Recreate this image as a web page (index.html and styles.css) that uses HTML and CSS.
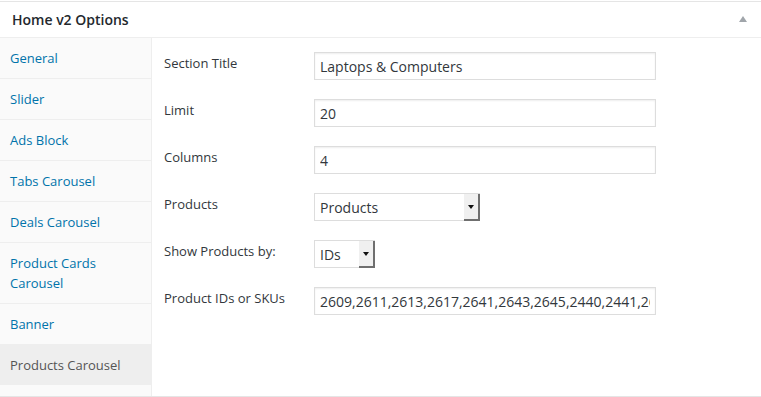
FILE: index.html
```html
<!DOCTYPE html>
<html lang="en">
<head>
  <meta charset="UTF-8" />
  <title>Home v2 Options</title>
  <link rel="stylesheet" href="styles.css">
</head>
<body>

  <div class="postbox">
    <div class="hndle">
      <h2>Home v2 Options</h2>
      <span class="toggle"></span>
    </div>

    <div class="inside">
      <ul class="tabs">
        <li><a href="#">General</a></li>
        <li><a href="#">Slider</a></li>
        <li><a href="#">Ads Block</a></li>
        <li><a href="#">Tabs Carousel</a></li>
        <li><a href="#">Deals Carousel</a></li>
        <li><a href="#">Product Cards Carousel</a></li>
        <li><a href="#">Banner</a></li>
        <li class="active"><a href="#">Products Carousel</a></li>
      </ul>

      <div class="panel">
        <label for="title">Section Title</label>
        <input type="text" id="title" value="Laptops &amp; Computers" />

        <label for="limit">Limit</label>
        <input type="text" id="limit" value="20" />

        <label for="columns">Columns</label>
        <input type="text" id="columns" value="4" />

        <label for="products">Products</label>
        <span class="select-wrap wide">
          <select id="products">
            <option>Products</option>
          </select>
        </span>

        <label for="by">Show Products by:</label>
        <span class="select-wrap narrow">
          <select id="by">
            <option>IDs</option>
          </select>
        </span>

        <label for="ids">Product IDs or SKUs</label>
        <input type="text" id="ids" value="2609,2611,2613,2617,2641,2643,2645,2440,2441,2619,2621" />
      </div>
    </div>
  </div>

</body>
</html>
```

FILE: styles.css
```css
body {
  margin: 0;
  padding-top: 1px;
  font-family: "Open Sans", sans-serif;
  font-size: 13px;
  color: #32373c;
  background: #fff;
}
.postbox {
  border-top: 1px solid #e5e5e5;
  border-bottom: 1px solid #e5e5e5;
  background: #fff;
}
.hndle {
  display: flex;
  align-items: center;
  justify-content: space-between;
  border-bottom: 1px solid #eee;
  padding: 8px 14px 8px 12px;
}
.hndle h2 {
  margin: 0;
  font-size: 14px;
  line-height: 19px;
  font-weight: 600;
  color: #23282d;
}
.toggle {
  width: 0;
  height: 0;
  border-left: 4px solid transparent;
  border-right: 4px solid transparent;
  border-bottom: 6px solid #a0a5aa;
  margin-top: -2px;
}
.inside {
  display: flex;
  height: 358px;
}
.tabs {
  list-style: none;
  margin: 0;
  padding: 0;
  width: 151px;
  background: #fafafa;
  border-right: 1px solid #eee;
}
.tabs li {
  border-bottom: 1px solid #eee;
  padding: 10px;
  line-height: 20px;
}
.tabs a {
  color: #0073aa;
  text-decoration: none;
}
.tabs li.active {
  background: #eee;
  border-bottom: none;
}
.tabs li.active a {
  color: #555;
}
.panel {
  display: grid;
  grid-template-columns: 150px auto;
  grid-auto-rows: 28px;
  row-gap: 19px;
  align-content: start;
  padding: 14px 12px 0;
}
.panel label {
  line-height: 20px;
  padding-top: 1px;
}
.panel input {
  width: 342px;
  height: 28px;
  box-sizing: border-box;
  margin: 0;
  padding: 3px 5px;
  border: 1px solid #ddd;
  box-shadow: inset 0 1px 2px rgba(0,0,0,0.07);
  font-family: "Open Sans", sans-serif;
  font-size: 14px;
  color: #32373c;
  outline: none;
}
.select-wrap {
  position: relative;
  display: inline-block;
  height: 28px;
}
.select-wrap.wide {
  width: 166px;
}
.select-wrap.narrow {
  width: 61px;
}
.select-wrap select {
  -webkit-appearance: none;
  appearance: none;
  width: 100%;
  height: 28px;
  margin: 0;
  padding: 0 5px;
  border: 1px solid #ddd;
  border-radius: 0;
  background: #fff;
  font-family: "Open Sans", sans-serif;
  font-size: 14px;
  color: #32373c;
}
.select-wrap::after {
  content: "";
  position: absolute;
  top: 1px;
  right: 0;
  bottom: 0;
  width: 16px;
  background: #f0f0f0;
  box-shadow: inset -2px -2px 0 #6f6f6f;
}
.select-wrap::before {
  content: "";
  position: absolute;
  z-index: 1;
  top: 12px;
  right: 6px;
  border-left: 3px solid transparent;
  border-right: 3px solid transparent;
  border-top: 4px solid #111;
}
```
